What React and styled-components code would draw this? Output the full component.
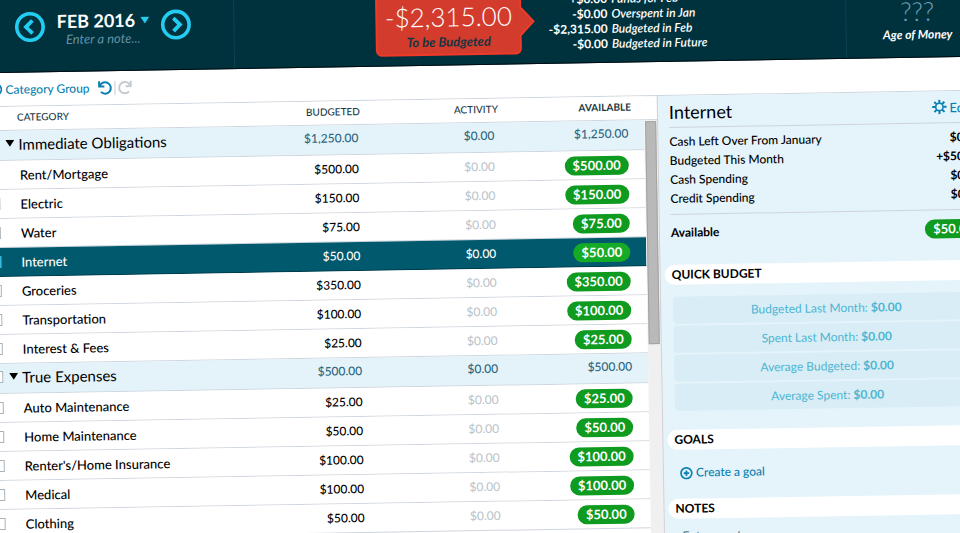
import React from "react";
import styled, { createGlobalStyle, css } from "styled-components";

const GlobalStyle = createGlobalStyle`
  *, *::before, *::after { box-sizing: border-box; }
  body {
    margin: 0;
    overflow: hidden;
    background: #fff;
    color: #000;
    font: 400 12px/18px Lato, "Liberation Sans", sans-serif;
  }
  button {
    padding: 0;
    border: 0;
    background: none;
    color: inherit;
    font: inherit;
    cursor: pointer;
  }
`;

const Viewport = styled.div`
  height: 100vh;
  overflow: hidden;
`;

const Tilted = styled.div`
  display: flex;
  flex-direction: column;
  width: calc(100% + 70px);
  min-height: calc(100vh + 40px);
  margin-left: -40px;
  transform: rotate(-0.95deg);
  transform-origin: 40px 0;
`;

/* ---------- header ---------- */

const Header = styled.header`
  display: grid;
  grid-template-columns: 274px 1fr 145px;
  grid-template-rows: 72px;
  margin-top: -20px;
  padding-top: 20px;
  background: #00323e;
  border-bottom: 1px solid #000c12;
`;

const MonthPicker = styled.section`
  display: flex;
  align-items: flex-start;
  gap: 11px;
  padding: 12px 0 0 54px;
  border-right: 1px solid #0a4350;
`;

const RoundButton = styled.button`
  width: 31px;
  height: 31px;
  color: #23cdf2;
  svg { display: block; }
`;

const MonthText = styled.div`
  display: flex;
  flex-direction: column;
  align-items: center;
  width: 93px;
`;

const MonthButton = styled.button`
  display: flex;
  align-items: center;
  gap: 5px;
  color: #fff;
  font-size: 18px;
  font-weight: 700;
  line-height: 20px;
  white-space: nowrap;
  svg { fill: #23cdf2; }
`;

const MonthNote = styled.button`
  color: #6491a3;
  font-size: 13px;
  font-style: italic;
  line-height: 16px;
`;

const Totals = styled.section`
  display: flex;
  align-items: flex-start;
  padding-left: 141px;
`;

const ToBudget = styled.div`
  position: relative;
  width: 146px;
  height: 83px;
  margin-top: -20px;
  padding-top: 26px;
  background: #d33c2d;
  border: 2px solid #ee3a29;
  border-radius: 6px;
  text-align: center;
`;

const Pointer = styled.svg`
  position: absolute;
  left: 142px;
  top: 34px;
`;

const BigAmount = styled.div`
  color: ${(p) => (p.$muted ? "#6f9fb8" : "#fff")};
  font-size: 26px;
  font-weight: 300;
  line-height: 32px;
`;

const BigLabel = styled.div`
  color: #173440;
  font-size: 13px;
  font-style: italic;
  font-weight: 700;
  line-height: 18px;
`;

const Breakdown = styled.dl`
  margin: 1px 0 0;
  color: #fff;
  font-weight: 700;
  line-height: 15px;
  white-space: nowrap;
`;

const BreakdownRow = styled.div`
  display: flex;
  flex-direction: row-reverse;
  justify-content: flex-end;
  gap: 4px;
  dt { font-style: italic; font-weight: 600; }
  dd { width: 86px; margin: 0; text-align: right; }
`;

const Age = styled.section`
  padding: 10px 2px 0 0;
  border-left: 1px solid #0a4350;
  color: #fff;
  text-align: center;
`;

const AgeLabel = styled.div`
  font-style: italic;
  font-weight: 700;
  line-height: 16px;
`;

/* ---------- toolbar ---------- */

const Toolbar = styled.nav`
  display: flex;
  align-items: center;
  gap: 3px;
  height: 33px;
  padding-left: 28px;
`;

const LinkButton = styled.button`
  display: flex;
  align-items: center;
  gap: 3px;
  color: #0a7fb3;
  font-weight: 500;
  white-space: nowrap;
`;

const IconButton = styled.button`
  color: ${(p) => (p.disabled ? "#c3ccd2" : "#0a7fb3")};
  svg { display: block; }
`;

const History = styled.div`
  display: flex;
  align-items: center;
  gap: 2px;
  margin-left: 5px;
`;

const Bar = styled.span`
  width: 1px;
  height: 14px;
  background: #c3ccd2;
`;

/* ---------- budget ---------- */

const Main = styled.main`
  flex: 1;
  display: grid;
  grid-template-columns: 1fr 335px;
  border-top: 1px solid #cdd5dd;
`;

const BudgetPane = styled.section`
  display: flex;
`;

const rule = css`border-bottom: 1px solid #cfd6de;`;

const Table = styled.table`
  display: block;
  flex: 1;
`;

const HeadGroup = styled.thead`
  display: block;
`;

const BodyGroup = styled.tbody`
  display: block;
`;

const Row = styled.tr`
  ${rule}
  display: grid;
  grid-template-columns: 40px 1fr 120px 136px 138px;
  align-items: center;
  height: ${(p) => (p.$head ? 24 : p.$group ? 30 : 29)}px;
  padding-bottom: ${(p) => (p.$head || p.$group ? 4 : 0)}px;
  background: ${(p) => (p.$selected ? "#00596d" : p.$group ? "#e4f3f9" : "#fff")};
  border-bottom-color: ${(p) => (p.$selected ? "#00394a" : "#cfd6de")};
  color: ${(p) => (p.$selected ? "#fff" : "#000")};
`;

const Cell = styled.td`
  padding: 0;
`;

const Head = styled.th`
  padding: 0 ${(p) => p.$end || 0}px 0 ${(p) => (p.$end ? 0 : 15)}px;
  color: #1c3944;
  font-size: 10px;
  font-weight: ${(p) => (p.$strong ? 700 : 500)};
  text-align: ${(p) => (p.$end ? "right" : "left")};
`;

const Name = styled.th`
  padding: 0 0 0 ${(p) => (p.$group ? 3 : 17)}px;
  font-size: 13px;
  font-weight: 500;
  text-align: left;
`;

const GroupToggle = styled.button`
  display: flex;
  align-items: center;
  gap: 4px;
  font-size: 15px;
  font-weight: 400;
`;

const Money = styled.td`
  padding: 0 ${(p) => p.$end}px 0 0;
  color: ${(p) => (p.$group ? "#2c6680" : p.$dim ? "#b9c2c8" : "inherit")};
  font-weight: ${(p) => (p.$dim ? 400 : 500)};
  text-align: right;
`;

const Pill = styled.span`
  display: block;
  width: fit-content;
  margin-left: auto;
  padding: 0 8px;
  border-radius: 10px;
  background: ${(p) => (p.$bright ? "#16ab27" : "#0f9a20")};
  color: #fff;
  font-size: 13px;
  font-weight: 700;
  line-height: 19px;
`;

const Check = styled.input`
  display: block;
  appearance: none;
  width: 12px;
  height: 12px;
  margin: 0 0 0 25px;
  border: 1px solid #a9b3ba;
  background: #fff;
  &:checked { background: #35b9dc; border-color: #35b9dc; }
`;

const Gutter = styled.div`
  display: flex;
  flex-direction: column;
  width: 13px;
`;

const GutterHead = styled.div`
  ${rule}
  height: 24px;
`;

const Track = styled.div`
  flex: 1;
  padding: 1px 1px 0;
  background: #f0f0f0;
`;

const Thumb = styled.div`
  height: 223px;
  background: #b9b9b9;
  border: 1px solid #a3a3a3;
`;

/* ---------- inspector ---------- */

const Inspector = styled.aside`
  padding: 0 0 0 4px;
  border-left: 1px solid #d5cfd3;
  background: #e4f4fa;
`;

const Summary = styled.section`
  padding: 0 12px 0 7px;
`;

const SummaryHead = styled.div`
  display: flex;
  align-items: center;
  justify-content: space-between;
  height: 32px;
  border-bottom: 1px solid #cfd3dc;
`;

const Title = styled.h2`
  margin: 0;
  font-size: 18px;
  font-weight: 400;
`;

const EditButton = styled(LinkButton)`
  padding-right: 8px;
  font-size: 13px;
`;

const Facts = styled.dl`
  margin: 0;
  padding: 4px 0 6px;
  border-bottom: 1px solid #cfd3dc;
`;

const Fact = styled.div`
  display: flex;
  justify-content: space-between;
  align-items: center;
  line-height: 19px;
  dt { font-weight: 500; }
  dd { margin: 0; font-weight: 700; }
`;

const AvailableLine = styled.div`
  display: flex;
  align-items: center;
  height: 36px;
  font-weight: 700;
`;

const Section = styled.section`
  margin-top: ${(p) => p.$gap}px;
`;

const SectionTitle = styled.h3`
  margin: 0;
  padding-left: 7px;
  border-radius: 10px 0 0 10px;
  background: #fff;
  font-size: 12px;
  font-weight: 700;
  line-height: 20px;
`;

const QuickList = styled.div`
  display: grid;
  gap: 2px;
  padding: 12px 16px 0 8px;
`;

const QuickButton = styled.button`
  border-radius: 4px;
  background: #d8edf5;
  color: #4db5d3;
  line-height: 27px;
  b { font-weight: 700; }
`;

const GoalButton = styled(LinkButton)`
  margin: 14px 0 0 12px;
`;

const NoteField = styled.textarea`
  display: block;
  width: calc(100% - 24px);
  height: 40px;
  margin: 6px 0 0 10px;
  padding: 3px;
  border: 0;
  background: transparent;
  font: italic 13px/16px Lato, sans-serif;
  resize: none;
  &::placeholder { color: #4f7480; }
`;

/* ---------- drawings ---------- */

const Chevron = ({ right }) => (
  <svg width="31" height="31" viewBox="0 0 31 31" fill="none" stroke="currentColor" strokeWidth="3.600">
    <circle cx="15.500" cy="15.500" r="13.200" />
    <path d={right ? "M13 9l6.500 6.500L13 22" : "M18 9l-6.500 6.500L18 22"} strokeWidth="3.800" />
  </svg>
);

const PlusCircle = () => (
  <svg width="13" height="13" viewBox="0 0 13 13" fill="none" stroke="currentColor">
    <circle cx="6.500" cy="6.500" r="5.400" strokeWidth="1.700" />
    <path d="M6.500 3.800v5.400M3.800 6.500h5.400" strokeWidth="1.900" />
  </svg>
);

const TurnArrow = ({ forward }) => (
  <svg width="15" height="15" viewBox="0 0 15 15" fill="none" stroke="currentColor" strokeWidth="2">
    <g transform={forward ? "matrix(-1 0 0 1 15 0)" : undefined}>
      <path d="M2.400 5.400A5.700 5.700 0 1 1 3.400 11.500" />
      <path d="M1.700 1v5.200h5.200" />
    </g>
  </svg>
);

const Gear = () => (
  <svg width="15" height="15" viewBox="0 0 15 15" fill="none" stroke="currentColor">
    <circle cx="7.500" cy="7.500" r="3.700" strokeWidth="1.600" />
    <path
      d="M7.500 .3v3.200M7.500 11.500v3.200M.3 7.500h3.200M11.500 7.500h3.200M2.450 2.450l2.200 2.200M10.350 10.350l2.200 2.200M2.450 12.550l2.200-2.200M10.350 4.650l2.200-2.200"
      strokeWidth="2"
    />
  </svg>
);

const Triangle = () => (
  <svg width="9" height="7" viewBox="0 0 9 7"><path d="M0 0h9L4.500 7z" /></svg>
);

/* ---------- data ---------- */

const breakdown = [
  ["+$0.00", "Funds for Feb"],
  ["-$0.00", "Overspent in Jan"],
  ["-$2,315.00", "Budgeted in Feb"],
  ["-$0.00", "Budgeted in Future"],
];

const groups = [
  {
    name: "Immediate Obligations",
    total: "$1,250.00",
    items: [
      ["Rent/Mortgage", "$500.00"],
      ["Electric", "$150.00"],
      ["Water", "$75.00"],
      ["Internet", "$50.00"],
      ["Groceries", "$350.00"],
      ["Transportation", "$100.00"],
      ["Interest & Fees", "$25.00"],
    ],
  },
  {
    name: "True Expenses",
    total: "$500.00",
    items: [
      ["Auto Maintenance", "$25.00"],
      ["Home Maintenance", "$50.00"],
      ["Renter's/Home Insurance", "$100.00"],
      ["Medical", "$100.00"],
      ["Clothing", "$50.00"],
    ],
  },
];

const facts = [
  ["Cash Left Over From January", "$0.00"],
  ["Budgeted This Month", "+$50.00"],
  ["Cash Spending", "$0.00"],
  ["Credit Spending", "$0.00"],
];

const quick = ["Budgeted Last Month", "Spent Last Month", "Average Budgeted", "Average Spent"];

const GroupRows = ({ group, selected }) => (
  <BodyGroup>
    <Row $group>
      <Cell><Check type="checkbox" aria-label={`Select ${group.name}`} /></Cell>
      <Name $group scope="row">
        <GroupToggle aria-expanded="true"><Triangle />{group.name}</GroupToggle>
      </Name>
      <Money $group $end={12}>{group.total}</Money>
      <Money $group $end={12}>$0.00</Money>
      <Money $group $end={16}>{group.total}</Money>
    </Row>
    {group.items.map(([name, amount]) => {
      const on = name === selected;
      return (
        <Row key={name} $selected={on}>
          <Cell><Check type="checkbox" aria-label={`Select ${name}`} defaultChecked={on} /></Cell>
          <Name scope="row">{name}</Name>
          <Money $end={12}>{amount}</Money>
          <Money $end={12} $dim={!on}>$0.00</Money>
          <Money $end={16}><Pill $bright={on}>{amount}</Pill></Money>
        </Row>
      );
    })}
  </BodyGroup>
);

export default function App() {
  return (
    <Viewport>
      <GlobalStyle />
      <Tilted>
        <Header>
          <MonthPicker>
            <RoundButton aria-label="Previous month"><Chevron /></RoundButton>
            <MonthText>
              <MonthButton>FEB 2016 <Triangle /></MonthButton>
              <MonthNote>Enter a note...</MonthNote>
            </MonthText>
            <RoundButton aria-label="Next month"><Chevron right /></RoundButton>
          </MonthPicker>
          <Totals>
            <ToBudget>
              <BigAmount>-$2,315.00</BigAmount>
              <BigLabel>To be Budgeted</BigLabel>
              <Pointer width="16" height="28" viewBox="0 0 16 28">
                <path d="M0 0h2l13 14-13 14H0z" fill="#d33c2d" />
                <path d="M1 0l13 14L1 28" fill="none" stroke="#ee3a29" strokeWidth="2" />
              </Pointer>
            </ToBudget>
            <Breakdown>
              {breakdown.map(([amount, label]) => (
                <BreakdownRow key={label}>
                  <dt>{label}</dt>
                  <dd>{amount}</dd>
                </BreakdownRow>
              ))}
            </Breakdown>
          </Totals>
          <Age>
            <BigAmount $muted>???</BigAmount>
            <AgeLabel>Age of Money</AgeLabel>
          </Age>
        </Header>

        <Toolbar>
          <LinkButton><PlusCircle />Category Group</LinkButton>
          <History>
            <IconButton aria-label="Undo"><TurnArrow /></IconButton>
            <Bar />
            <IconButton aria-label="Redo" disabled><TurnArrow forward /></IconButton>
          </History>
        </Toolbar>

        <Main>
          <BudgetPane>
            <Table>
              <HeadGroup>
                <Row $head>
                  <Cell />
                  <Head scope="col">CATEGORY</Head>
                  <Head scope="col" $end={10}>BUDGETED</Head>
                  <Head scope="col" $end={8}>ACTIVITY</Head>
                  <Head scope="col" $end={13} $strong>AVAILABLE</Head>
                </Row>
              </HeadGroup>
              {groups.map((g) => <GroupRows key={g.name} group={g} selected="Internet" />)}
            </Table>
            <Gutter><GutterHead /><Track><Thumb /></Track></Gutter>
          </BudgetPane>

          <Inspector>
            <Summary>
              <SummaryHead>
                <Title>Internet</Title>
                <EditButton><Gear />Edit</EditButton>
              </SummaryHead>
              <Facts>
                {facts.map(([label, value]) => (
                  <Fact key={label}><dt>{label}</dt><dd>{value}</dd></Fact>
                ))}
              </Facts>
              <AvailableLine>Available <Pill>$50.00</Pill></AvailableLine>
            </Summary>
            <Section $gap={14}>
              <SectionTitle>QUICK BUDGET</SectionTitle>
              <QuickList>
                {quick.map((q) => <QuickButton key={q}>{q}: <b>$0.00</b></QuickButton>)}
              </QuickList>
            </Section>
            <Section $gap={19}>
              <SectionTitle>GOALS</SectionTitle>
              <GoalButton><PlusCircle />Create a goal</GoalButton>
            </Section>
            <Section $gap={17}>
              <SectionTitle>NOTES</SectionTitle>
              <NoteField aria-label="Notes" placeholder="Enter a note..." />
            </Section>
          </Inspector>
        </Main>
      </Tilted>
    </Viewport>
  );
}
